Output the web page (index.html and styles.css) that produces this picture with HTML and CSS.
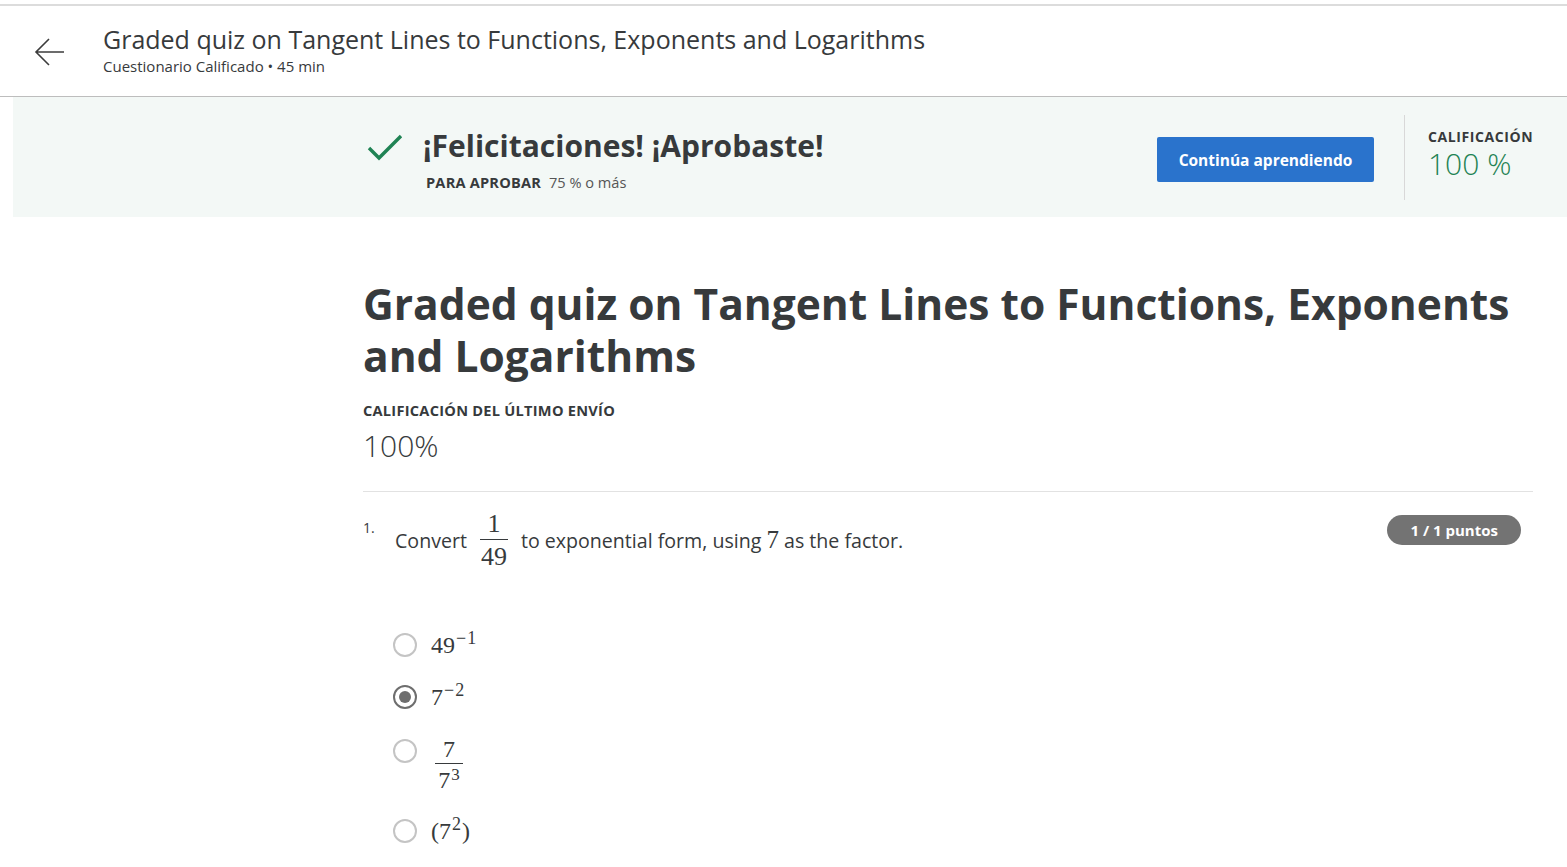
FILE: index.html
```html
<!DOCTYPE html>
<html lang="es">
<head>
<meta charset="utf-8">
<title>Graded quiz</title>
<link rel="stylesheet" href="styles.css">
</head>
<body>
<div class="topline"></div>
<header class="header">
  <button class="back" aria-label="Atrás">
    <svg width="32" height="32" viewBox="0 0 32 32" fill="none" stroke="#3c3c3c" stroke-width="1.6">
      <path d="M30 16H2M15 3L2 16l13 13"/>
    </svg>
  </button>
  <div class="header-text">
    <div class="header-title">Graded quiz on Tangent Lines to Functions, Exponents and Logarithms</div>
    <div class="header-sub">Cuestionario Calificado • 45 min</div>
  </div>
</header>

<section class="banner">
  <div class="banner-inner">
    <div class="pass">
      <svg class="check" width="36" height="28" viewBox="0 0 36 28" fill="none" stroke="#1f8354" stroke-width="3.4">
        <path d="M2 14l10 10L34 2"/>
      </svg>
      <div>
        <div class="pass-title">¡Felicitaciones! ¡Aprobaste!</div>
        <div class="pass-sub"><span class="label">PARA APROBAR</span> 75 % o más</div>
      </div>
    </div>
    <button class="cta">Continúa aprendiendo</button>
    <div class="grade">
      <div class="label">CALIFICACIÓN</div>
      <div class="grade-val">100 %</div>
    </div>
  </div>
</section>

<main class="main">
  <h1 class="title">Graded quiz on Tangent Lines to Functions, Exponents and Logarithms</h1>
  <div class="label last">CALIFICACIÓN DEL ÚLTIMO ENVÍO</div>
  <div class="last-val">100%</div>
  <hr class="rule">
  <div class="question">
    <div class="qnum">1.</div>
    <div class="qbody">
      <div class="qtext">
        <span>Convert</span>
        <span class="frac m qfrac"><span class="num">1</span><span class="den">49</span></span>
        <span>to exponential form, using <span class="m">7</span> as the factor.</span>
      </div>
      <div class="options">
        <label class="opt"><span class="radio"></span><span class="m">49<sup>−1</sup></span></label>
        <label class="opt"><span class="radio on"></span><span class="m">7<sup>−2</sup></span></label>
        <label class="opt tall"><span class="radio"></span><span class="frac m"><span class="num">7</span><span class="den">7<sup>3</sup></span></span></label>
        <label class="opt"><span class="radio"></span><span class="m">(7<sup>2</sup>)</span></label>
      </div>
    </div>
    <div class="badge">1 / 1 puntos</div>
  </div>
</main>
</body>
</html>
```
FILE: styles.css
```css
* { box-sizing: border-box; }
html, body { margin: 0; padding: 0; background: #fff; }
body {
  font-family: "Open Sans", "Noto Sans", sans-serif;
  color: #373a3c;
  width: 1567px;
  height: 867px;
  overflow: hidden;
}
.topline { height: 6px; border-bottom: 2px solid #dcdcdc; }
.header {
  height: 91px;
  border-bottom: 1px solid #bdbdbd;
  display: flex;
  align-items: center;
  padding-left: 34px;
}
.back {
  border: 0; background: none; padding: 0; margin: 0 37px 0 0;
  width: 32px; height: 32px; display: flex; margin-top: 2px;
}
.header-text { display: flex; flex-direction: column; margin-top: -3px; }
.header-title { font-size: 25px; line-height: 32px; color: #373a3c; }
.header-sub { font-size: 15px; line-height: 20px; color: #373a3c; margin-top: 1px; }

.banner {
  margin-left: 13px;
  height: 120px;
  background: #f3f8f6;
}
.banner-inner {
  margin-left: 350px;
  width: 1170px;
  height: 100%;
  display: flex;
  align-items: flex-start;
}
.pass { display: flex; align-items: flex-start; flex: 1; padding-top: 29px; }
.check { margin: 8px 20px 0 4px; }
.pass-title { font-size: 30px; font-weight: 700; line-height: 40px; }
.pass-sub { font-size: 14.6px; line-height: 20px; margin-top: 6px; margin-left: 3px; color: #555; }
.label { font-size: 14.6px; font-weight: 700; color: #373a3c; letter-spacing: 0.2px; }
.pass-sub .label { margin-right: 4px; }
.cta {
  font-family: inherit;
  background: #2a73cc;
  color: #fff;
  border: 0;
  border-radius: 2px;
  width: 217px;
  height: 45px;
  font-size: 15.5px;
  font-weight: 700;
  margin-right: 30px;
  margin-top: 40px;
}
.grade {
  margin-top: 18px;
  height: 85px;
  border-left: 1px solid #d8d8d8;
  padding: 11px 0 0 23px;
  width: 129px;
}
.grade .label { font-size: 14px; letter-spacing: 0.6px; line-height: 22px; }
.grade-val { font-size: 30px; font-weight: 300; color: #1f8354; line-height: 30px; margin-top: 1px; }

.main {
  margin-left: 363px;
  width: 1170px;
  padding-top: 61px;
}
.title {
  font-size: 42.5px;
  font-weight: 700;
  line-height: 52px;
  margin: 0;
  color: #373a3c;
}
.last { margin-top: 18px; line-height: 20px; letter-spacing: 0.25px; }
.last-val { font-size: 30px; font-weight: 300; line-height: 40px; margin-top: 6px; }
.rule { border: 0; border-top: 1px solid #e2e2e2; margin: 25px 0 0; }

.question { display: flex; padding-top: 26px; }
.qnum { font-size: 14px; width: 32px; line-height: 20px; }
.qbody { flex: 1; }
.qtext {
  display: flex; align-items: center; gap: 13px;
  font-size: 19.6px; margin-top: -7px;
}
.m { font-family: "Liberation Serif", "DejaVu Serif", serif; font-size: 24px; line-height: 1; }
.qtext .m { font-size: 25px; }
.qtext .frac { font-size: 26px; }
.qfrac { margin-left: -2px; margin-right: -2px; }
.frac { display: inline-flex; flex-direction: column; align-items: center; padding: 0 1px; }
.frac .num { padding: 0 2px 2px; border-bottom: 1.5px solid #373a3c; min-width: 28px; text-align: center; }
.frac .den { padding: 4px 2px 0; }
sup { font-size: 18px; vertical-align: 9px; line-height: 0; margin-left: 1px; letter-spacing: 1px; }
.frac sup { font-size: 17px; vertical-align: 8px; letter-spacing: 0; }

.options { margin-top: 63px; margin-left: -2px; display: flex; flex-direction: column; }
.opt { display: flex; align-items: center; gap: 14px; height: 24px; margin-bottom: 28px; }
.opt.tall { height: 60px; align-items: flex-start; margin-bottom: 22px; }
.opt.tall .radio { margin-top: 2px; }
.opt.tall .m { margin-left: 3px; }
.radio {
  width: 24px; height: 24px; border-radius: 50%;
  border: 2px solid #c4c4c4; background: #fff; flex: none;
  display: flex; align-items: center; justify-content: center;
}
.radio.on { border: 2px solid #6e6e6e; }
.radio.on::after { content: ""; width: 12px; height: 12px; border-radius: 50%; background: #6e6e6e; }

.badge {
  align-self: flex-start;
  background: #737373;
  color: #fff;
  font-size: 15px;
  font-weight: 700;
  height: 30px;
  line-height: 30px;
  padding: 0 23px;
  border-radius: 15px;
  margin-top: -3px;
  margin-right: 12px;
}
```
